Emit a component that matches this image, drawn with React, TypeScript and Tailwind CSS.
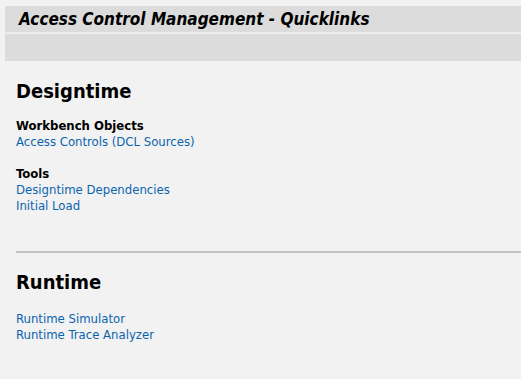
export default function App() {
  return (
    <div className="min-h-[379px] bg-[#f2f2f2] pt-[6px] pl-[5px] font-['DejaVu_Sans_Condensed','DejaVu_Sans',sans-serif] text-black">
      {/* Title bars */}
      <div className="h-[26px] bg-[#dcdcdc] pl-[14px] flex items-center">
        <h1 className="text-[17px] font-bold italic leading-none">Access Control Management - Quicklinks</h1>
      </div>
      <div className="h-[2px] bg-[#ececec]" />
      <div className="h-[27px] bg-[#dcdcdc]" />

      <div className="pl-[11px] pt-[17px]">
        <h2 className="text-[20px] font-bold leading-[26px]">Designtime</h2>

        <div className="mt-[14px]">
          <h3 className="text-[13px] font-bold leading-[16px]">Workbench Objects</h3>
          <a className="block text-[13px] leading-[16px] text-[#0a64ad]">Access Controls (DCL Sources)</a>
        </div>

        <div className="mt-[16px]">
          <h3 className="text-[13px] font-bold leading-[16px]">Tools</h3>
          <a className="block text-[13px] leading-[16px] text-[#0a64ad]">Designtime Dependencies</a>
          <a className="block text-[13px] leading-[16px] text-[#0a64ad]">Initial Load</a>
        </div>

        <div className="mt-[37px] border-t-2 border-[#c4c4c4]" />

        <h2 className="mt-[16px] text-[20px] font-bold leading-[26px]">Runtime</h2>

        <div className="mt-[16px]">
          <a className="block text-[13px] leading-[16px] text-[#0a64ad]">Runtime Simulator</a>
          <a className="block text-[13px] leading-[16px] text-[#0a64ad]">Runtime Trace Analyzer</a>
        </div>
      </div>
    </div>
  );
}
